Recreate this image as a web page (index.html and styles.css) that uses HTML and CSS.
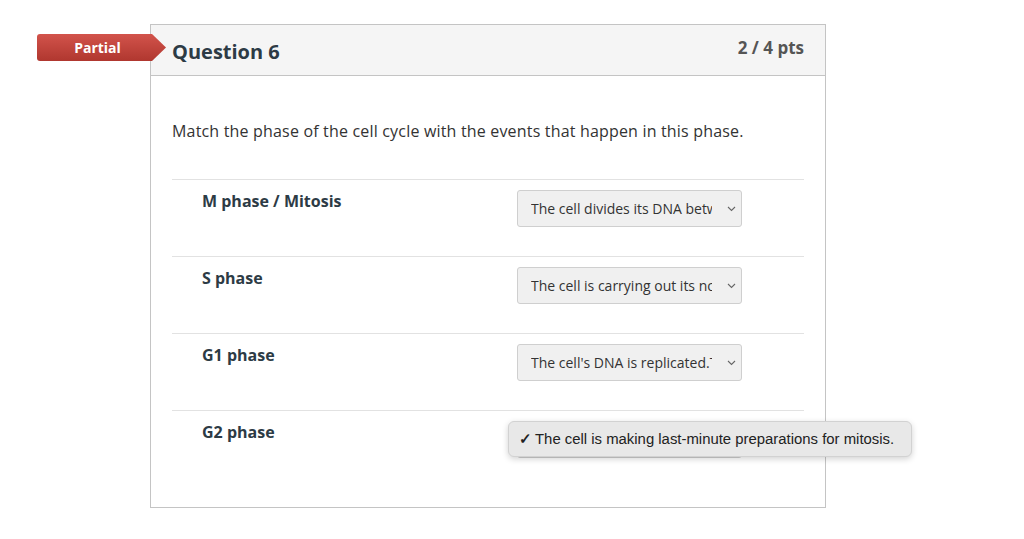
FILE: index.html
```html
<!DOCTYPE html>
<html lang="en">
<head>
    <meta charset="UTF-8">
    <title>Question 6</title>
    <link rel="stylesheet" href="styles.css">
</head>
<body>
    <div class="page">
        <div class="question">
            <div class="badge">Partial</div>
            <div class="question-header">
                <h2>Question 6</h2>
                <span class="points">2 / 4 pts</span>
            </div>
            <div class="question-body">
                <p class="question-text">Match the phase of the cell cycle with the events that happen in this phase.</p>

                <div class="match-row">
                    <div class="match-label">M phase / Mitosis</div>
                    <div class="fake-select">
                        <span class="select-text">The cell divides its DNA between two daughter cells.</span>
                        <svg class="chevron" width="9" height="6" viewBox="0 0 9 6"><path d="M1 1l3.5 3.5L8 1" fill="none" stroke="#666" stroke-width="1.1"/></svg>
                    </div>
                </div>

                <div class="match-row">
                    <div class="match-label">S phase</div>
                    <div class="fake-select">
                        <span class="select-text">The cell is carrying out its normal functions.</span>
                        <svg class="chevron" width="9" height="6" viewBox="0 0 9 6"><path d="M1 1l3.5 3.5L8 1" fill="none" stroke="#666" stroke-width="1.1"/></svg>
                    </div>
                </div>

                <div class="match-row">
                    <div class="match-label">G1 phase</div>
                    <div class="fake-select">
                        <span class="select-text">The cell's DNA is replicated.The</span>
                        <svg class="chevron" width="9" height="6" viewBox="0 0 9 6"><path d="M1 1l3.5 3.5L8 1" fill="none" stroke="#666" stroke-width="1.1"/></svg>
                    </div>
                </div>

                <div class="match-row">
                    <div class="match-label">G2 phase</div>
                    <div class="fake-select">
                        <span class="select-text">The cell is making last-minute preparations for mitosis.</span>
                        <svg class="chevron" width="9" height="6" viewBox="0 0 9 6"><path d="M1 1l3.5 3.5L8 1" fill="none" stroke="#666" stroke-width="1.1"/></svg>
                        <div class="dropdown-menu">
                            <span class="check">✓</span>The cell is making last-minute preparations for mitosis.
                        </div>
                    </div>
                </div>
            </div>
        </div>
    </div>
</body>
</html>
```

FILE: styles.css
```css
* {
    margin: 0;
    padding: 0;
    box-sizing: border-box;
}

body {
    background: #fff;
    font-family: "Open Sans", sans-serif;
    color: #2d3b45;
}

.page {
    padding: 24px 0 0 150px;
}

.question {
    position: relative;
    width: 676px;
    border: 1px solid #c4c4c4;
}

.badge {
    position: absolute;
    left: -114px;
    top: 9px;
    width: 129px;
    height: 27px;
    padding-right: 8px;
    background: linear-gradient(#d2534b, #b0372f);
    color: #fff;
    font-size: 14px;
    font-weight: bold;
    line-height: 27px;
    text-align: center;
    border-radius: 3px 0 0 3px;
    clip-path: polygon(0 0, 115px 0, 129px 50%, 115px 100%, 0 100%);
}

.question-header {
    display: flex;
    justify-content: space-between;
    align-items: flex-start;
    height: 51px;
    padding: 0 21px;
    background: #f5f5f5;
    border-bottom: 1px solid #c4c4c4;
}

.question-header h2 {
    font-size: 20px;
    font-weight: bold;
    color: #2d3b45;
    line-height: 28px;
    margin-top: 13px;
}

.points {
    font-size: 17px;
    font-weight: bold;
    color: #555;
    line-height: 24px;
    margin-top: 11px;
}

.question-body {
    padding: 44px 21px 20px;
}

.question-text {
    font-size: 16px;
    letter-spacing: 0.18px;
    line-height: 22px;
    color: #333;
    margin-bottom: 37px;
}

.match-row {
    display: flex;
    height: 77px;
    padding-top: 10px;
    border-top: 1px solid #e2e2e2;
}

.match-label {
    width: 345px;
    padding-left: 30px;
    font-size: 16px;
    font-weight: bold;
    line-height: 22px;
    color: #2d3b45;
}

.fake-select {
    position: relative;
    display: flex;
    align-items: center;
    width: 225px;
    height: 37px;
    padding: 0 5px 0 13px;
    background: #f0f0f0;
    border: 1px solid #cfcfcf;
    border-radius: 3px;
}

.select-text {
    flex: 1;
    overflow: hidden;
    white-space: nowrap;
    font-size: 14px;
    color: #333;
}

.chevron {
    margin-left: 15px;
}

.dropdown-menu {
    position: absolute;
    left: -10px;
    top: -1px;
    width: 404px;
    height: 36px;
    padding-left: 10px;
    display: flex;
    align-items: center;
    background: #e8e8e8;
    border: 1px solid #d2d2d2;
    border-radius: 6px;
    box-shadow: 0 2px 6px rgba(0, 0, 0, 0.18);
    font-family: "Liberation Sans", Arial, sans-serif;
    font-size: 14.9px;
    color: #222;
    white-space: nowrap;
}

.check {
    width: 16px;
    font-size: 15px;
    font-weight: bold;
}
```
